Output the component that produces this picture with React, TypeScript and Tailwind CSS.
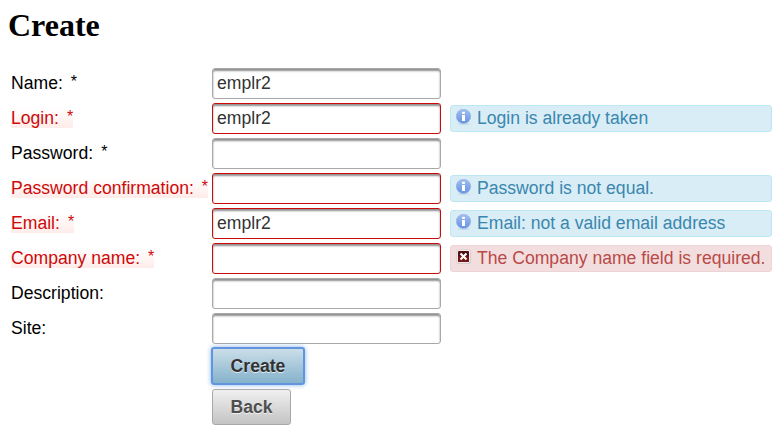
type Note = { kind: 'info' | 'error'; text: string };
type Field = { label: string; required?: boolean; invalid?: boolean; value?: string; note?: Note };

const fields: Field[] = [
  { label: 'Name:', required: true, value: 'emplr2' },
  { label: 'Login:', required: true, invalid: true, value: 'emplr2', note: { kind: 'info', text: 'Login is already taken' } },
  { label: 'Password:', required: true },
  { label: 'Password confirmation:', required: true, invalid: true, note: { kind: 'info', text: 'Password is not equal.' } },
  { label: 'Email:', required: true, invalid: true, value: 'emplr2', note: { kind: 'info', text: 'Email: not a valid email address' } },
  { label: 'Company name:', required: true, invalid: true, note: { kind: 'error', text: 'The Company name field is required.' } },
  { label: 'Description:' },
  { label: 'Site:' },
];

function InfoIcon() {
  return (
    <svg className="h-4 w-4 shrink-0" viewBox="0 0 16 16">
      <defs>
        <linearGradient id="info" x1="0" y1="0" x2="0" y2="1">
          <stop offset="0" stopColor="#a3bfef" />
          <stop offset="1" stopColor="#6492e3" />
        </linearGradient>
      </defs>
      <ellipse cx="7.7" cy="15" rx="6.5" ry="0.7" fill="#c5d6df" />
      <circle cx="7.5" cy="7.4" r="7.2" fill="url(#info)" stroke="#96b3e6" strokeWidth="0.6" />
      <rect x="6" y="2.7" width="3" height="2.4" rx="0.8" fill="#fff" />
      <path d="M6 6h3v6H6z" fill="#fff" />
    </svg>
  );
}

function ErrorIcon() {
  return (
    <svg className="h-4 w-4 shrink-0" viewBox="0 0 16 16">
      <rect x="1" y="1" width="14" height="14" rx="2.5" fill="#d8c6c7" />
      <rect x="0.7" y="0.5" width="13.8" height="13.8" rx="2.5" fill="#f5f0f0" stroke="#d0c4c4" strokeWidth="0.6" />
      <rect x="2" y="2" width="11" height="11" rx="1" fill="#4f1014" />
      <rect x="2" y="7" width="11" height="6" rx="1" fill="#781515" />
      <path d="M4.5 4.5l6 6M10.5 4.5l-6 6" stroke="#fff" strokeWidth="2.1" />
    </svg>
  );
}

function Row({ field }: { field: Field }) {
  const { label, required, invalid, value, note } = field;
  return (
    <div className="flex h-[35px] items-start">
      <div className="flex w-[201px] shrink-0 pt-[5px]">
        <div
          className={`flex h-5 whitespace-pre leading-5 ${
            invalid ? 'bg-linear-to-b from-white to-[#feece9] text-[#cd0a0a]' : 'text-black'
          }`}
        >
          <span>{label}</span>
          {required && <span className="ml-2 w-[6px] text-[16px] leading-[17px]">*</span>}
        </div>
      </div>
      <input
        readOnly
        defaultValue={value}
        className={`h-[31px] w-[229px] shrink-0 rounded-[3px] border bg-white pr-[5px] pl-1 text-[#333] shadow-[inset_0_2px_2px_#8f8f8f] outline-none ${
          invalid ? 'border-[#cd0a0a]' : 'border-[#a8a8a8]'
        }`}
      />
      {note && (
        <div
          className={`mt-[2px] ml-[9px] flex h-[27px] w-[322px] shrink-0 gap-[5px] rounded-[3px] border pl-[5px] leading-[25px] whitespace-nowrap ${
            note.kind === 'info'
              ? 'border-[#bce8f1] bg-[#d9edf7] text-[#3a87ad]'
              : 'border-[#eed3d7] bg-[#f2dede] text-[#b94a48]'
          }`}
        >
          <span className="pt-[3px]">{note.kind === 'info' ? <InfoIcon /> : <ErrorIcon />}</span>
          <span>{note.text}</span>
        </div>
      )}
    </div>
  );
}

export default function App() {
  return (
    <main className="h-[438px] w-[779px] overflow-hidden bg-white pl-[11px] font-['Liberation_Sans',Arial,sans-serif] text-[17.6px]">
      <h1 className="-ml-[3px] h-[68px] pt-[7px] font-['Liberation_Serif','Times_New_Roman',serif] text-[32px] leading-[36px] font-bold text-black">
        Create
      </h1>
      {fields.map((field) => (
        <Row key={field.label} field={field} />
      ))}
      <div className="flex flex-col items-start pl-[201px]">
        <button className="-ml-px -mt-px h-[38px] w-[94px] rounded-[3px] border-2 border-[#6195df] bg-linear-to-b from-[#cbdee8] to-[#85b2cb] font-bold text-[#313131] shadow-[0_0_5px_#85b2eb] [text-shadow:0_1px_0_rgba(255,255,255,0.7)]">
          Create
        </button>
        <button className="mt-1 h-9 w-[79px] rounded-[3px] border border-[#a8a8a8] bg-linear-to-b from-[#f0f0f0] to-[#c4c4c4] font-bold text-[#4f4f4f] [text-shadow:0_1px_0_rgba(255,255,255,0.7)]">
          Back
        </button>
      </div>
    </main>
  );
}
